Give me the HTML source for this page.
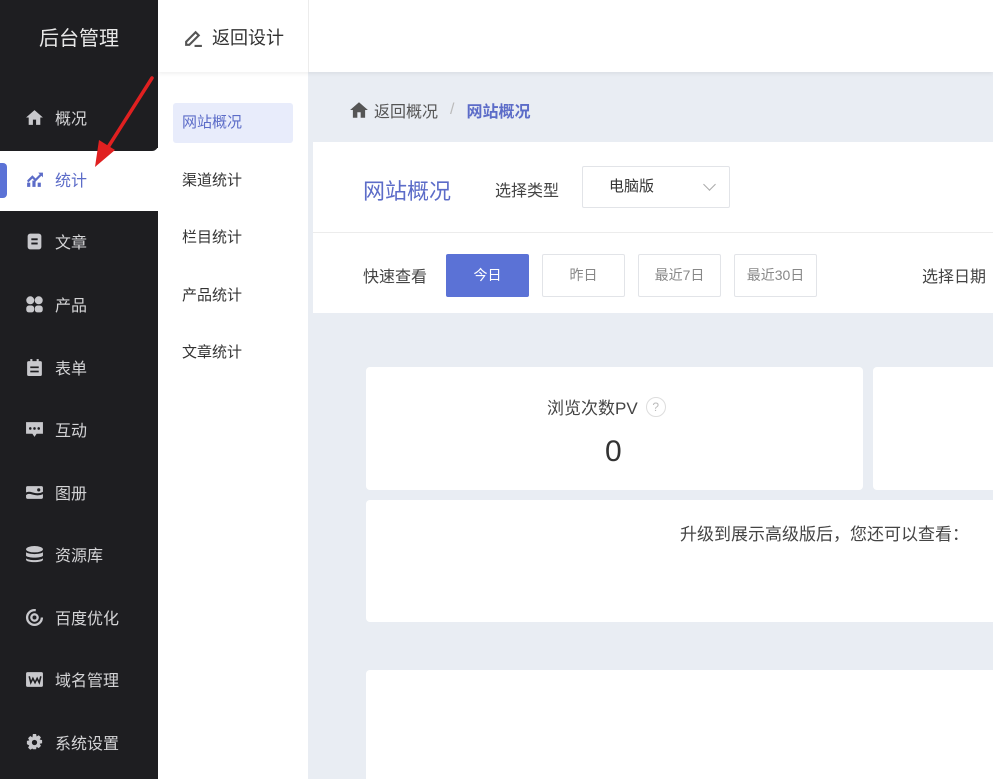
<!DOCTYPE html>
<html><head><meta charset="utf-8"><style>
*{margin:0;padding:0;box-sizing:border-box}
html,body{width:993px;height:779px;overflow:hidden}
body{background:#e9edf3;font-family:"Liberation Sans","Noto Sans CJK SC",sans-serif;position:relative}
.abs{position:absolute}
.side{left:0;top:0;width:158px;height:779px;background:#1e1e21}
.logo{left:0;top:22px;width:158px;text-align:center;color:#e8e8e8;font-size:20px}
.mi{left:0;width:158px;height:62px;color:#d4d4d6;font-size:16px;display:flex;align-items:center;padding-left:25px}
.mi svg{width:19px;height:19px;margin-right:11px;fill:#c8c8cc;flex-shrink:0}
.col2{left:158px;top:72px;width:150px;height:707px;background:#fff}
.sub{left:173px;width:120px;height:40px;line-height:40px;padding-left:9px;font-size:15px;color:#333}
.top{left:158px;top:0;width:835px;height:72px;background:#fff;box-shadow:0 2px 4px rgba(0,0,0,.06)}
.card{background:#fff;border-radius:4px}
.btn{top:254px;height:43px;border:1px solid #e2e4e8;background:#fff;border-radius:2px;font-size:14px;color:#888;text-align:center;line-height:41px}
</style></head><body>
<div class="abs side"></div>
<div class="abs logo">后台管理</div>
<div class="abs" style="left:0;top:148px;width:158px;height:63px;background:#fff"></div>
<div class="abs" style="left:0;top:143px;width:158px;height:8px;background:#1e1e21;border-radius:0 0 6px 0"></div>
<div class="abs" style="left:0;top:211px;width:158px;height:8px;background:#1e1e21;border-radius:0 6px 0 0"></div>
<div class="abs" style="left:0;top:163px;width:7px;height:35px;background:#5b72d6;border-radius:0 4px 4px 0"></div>

<div class="abs mi" style="top:86px"><svg viewBox="0 0 18 18"><path d="M9 2L1 9h2.5v7h4v-5h3v5h4V9H17z"/></svg>概况</div>
<div class="abs mi" style="top:148px;color:#5c6cc8"><svg viewBox="0 0 18 18" style="fill:#5c6cc8"><rect x="2" y="12" width="3" height="4"/><rect x="7" y="10" width="3" height="6"/><rect x="12" y="12" width="3" height="4"/><path d="M2 10l5-5 3 3 4-4-1.5-1.5H17v4.5L15.5 5.5 10 11 7 8 3 12z"/></svg>统计</div>
<div class="abs mi" style="top:210px"><svg viewBox="0 0 18 18"><rect x="2.5" y="1.5" width="13" height="15" rx="2.5"/><rect x="6" y="6" width="6" height="1.8" fill="#1e1e21"/><rect x="6" y="10" width="6" height="1.8" fill="#1e1e21"/></svg>文章</div>
<div class="abs mi" style="top:273px"><svg viewBox="0 0 18 18"><circle cx="5" cy="5" r="3.8"/><circle cx="13" cy="5" r="3.8"/><rect x="1.2" y="10" width="7.5" height="6.5" rx="2.5"/><rect x="9.3" y="10" width="7.5" height="6.5" rx="2.5"/></svg>产品</div>
<div class="abs mi" style="top:336px"><svg viewBox="0 0 18 18"><rect x="2" y="3" width="14" height="14" rx="1.5"/><rect x="5" y="1" width="2" height="4"/><rect x="11" y="1" width="2" height="4"/><rect x="5" y="8" width="8" height="1.6" fill="#1e1e21"/><rect x="5" y="12" width="8" height="1.6" fill="#1e1e21"/></svg>表单</div>
<div class="abs mi" style="top:398px"><svg viewBox="0 0 18 18"><path d="M1 2h16v11H11l-2 3-2-3H1z"/><circle cx="5" cy="8" r="1.2" fill="#1e1e21"/><circle cx="9" cy="8" r="1.2" fill="#1e1e21"/><circle cx="13" cy="8" r="1.2" fill="#1e1e21"/></svg>互动</div>
<div class="abs mi" style="top:461px"><svg viewBox="0 0 18 18"><rect x="1" y="3" width="16" height="12" rx="1.5"/><path d="M0 11c5-5 9 3 18-2" stroke="#1e1e21" stroke-width="2" fill="none"/><circle cx="13" cy="6.5" r="1.5" fill="#1e1e21"/></svg>图册</div>
<div class="abs mi" style="top:523px"><svg viewBox="0 0 18 18"><ellipse cx="9" cy="4" rx="8" ry="3"/><path d="M1 6.8c2 2.4 14 2.4 16 0v3.4c-2 2.4-14 2.4-16 0z"/><path d="M1 12.5c2 2.4 14 2.4 16 0v1.5c0 3-16 3-16 0z"/></svg>资源库</div>
<div class="abs mi" style="top:586px"><svg viewBox="0 0 18 18"><circle cx="9" cy="9" r="7" style="fill:none;stroke:#c8c8cc;stroke-width:2.2" stroke-dasharray="34 10"/><circle cx="9" cy="9" r="3" style="fill:none;stroke:#c8c8cc;stroke-width:2.2"/></svg>百度优化</div>
<div class="abs mi" style="top:648px"><svg viewBox="0 0 18 18"><rect x="1" y="2" width="16" height="14" rx="1.5"/><path d="M4 6l1.5 6 2-4 2 4 2-4 2 4L15 6" stroke="#1e1e21" stroke-width="1.5" fill="none"/></svg>域名管理</div>
<div class="abs mi" style="top:711px"><svg viewBox="0 0 18 18"><path d="M7.5 1h3l.5 2.3 2-1.2 2.1 2.1-1.2 2 2.3.5v3l-2.3.5 1.2 2-2.1 2.1-2-1.2-.5 2.3h-3L7 14.7l-2 1.2-2.1-2.1 1.2-2L1.8 10.5v-3L4.1 7 2.9 5l2.1-2.1 2 1.2z"/><circle cx="9" cy="9" r="2.5" fill="#1e1e21"/></svg>系统设置</div>

<div class="abs col2"></div>
<div class="abs top"></div>
<div class="abs" style="left:308px;top:0;width:1px;height:72px;background:#ececec"></div>
<div class="abs" style="left:183px;top:24px;font-size:18px;color:#333;display:flex;align-items:center"><svg width="21" height="21" viewBox="0 0 20 20" style="margin-right:8px"><path d="M3 14l9-9 3 3-9 9H3z M11 18h7" stroke="#555" stroke-width="2" fill="none"/></svg>返回设计</div>

<div class="abs sub" style="top:103px;background:#e8ecfb;color:#5c6cc8;border-radius:3px">网站概况</div>
<div class="abs sub" style="top:161px">渠道统计</div>
<div class="abs sub" style="top:218px">栏目统计</div>
<div class="abs sub" style="top:276px">产品统计</div>
<div class="abs sub" style="top:333px">文章统计</div>

<div class="abs" style="left:349px;top:98px;font-size:16px;color:#555;display:flex;align-items:center"><svg width="20" height="20" viewBox="0 0 18 18" style="margin-right:5px"><path d="M9 2L1 9h2.5v7h4v-5h3v5h4V9H17z" fill="#555"/></svg>返回概况<span style="color:#bbb;margin:0 12px">/</span><b style="color:#5c6cc8">网站概况</b></div>

<div class="abs" style="left:313px;top:142px;width:680px;height:171px;background:#fff"></div>
<div class="abs" style="left:313px;top:232px;width:680px;height:1px;background:#ececec"></div>
<div class="abs" style="left:363px;top:174px;font-size:22px;color:#5c6cc8">网站概况</div>
<div class="abs" style="left:495px;top:177px;font-size:16px;color:#444">选择类型</div>
<div class="abs" style="left:582px;top:166px;width:148px;height:42px;border:1px solid #e2e4e8;border-radius:2px;font-size:15px;color:#333;line-height:40px;padding-left:26px">电脑版<span style="position:absolute;left:122px;top:13px;width:9px;height:9px;border-right:1px solid #aaa;border-bottom:1px solid #aaa;transform:rotate(45deg)"></span></div>
<div class="abs" style="left:363px;top:263px;font-size:16px;color:#444">快速查看</div>
<div class="abs btn" style="left:446px;width:83px;background:#5b72d6;border-color:#5b72d6;color:#fff">今日</div>
<div class="abs btn" style="left:542px;width:83px">昨日</div>
<div class="abs btn" style="left:638px;width:83px">最近7日</div>
<div class="abs btn" style="left:734px;width:83px">最近30日</div>
<div class="abs" style="left:922px;top:263px;font-size:16px;color:#444;white-space:nowrap">选择日期</div>

<div class="abs card" style="left:366px;top:367px;width:497px;height:123px"></div>
<div class="abs card" style="left:873px;top:367px;width:130px;height:123px"></div>
<div class="abs" style="left:547px;top:394px;font-size:17px;color:#444;display:flex;align-items:center">浏览次数PV<span style="margin-left:8px;width:20px;height:20px;border:1px solid #ddd;border-radius:50%;font-size:12px;color:#bbb;text-align:center;line-height:18px">?</span></div>
<div class="abs" style="left:605px;top:435px;font-size:30px;color:#333">0</div>
<div class="abs card" style="left:366px;top:500px;width:640px;height:122px"></div>
<div class="abs" style="left:680px;top:520px;font-size:17px;color:#444;white-space:nowrap">升级到展示高级版后，您还可以查看：</div>
<div class="abs card" style="left:366px;top:670px;width:640px;height:109px;border-radius:4px 4px 0 0"></div>

<svg class="abs" style="left:85px;top:72px" width="75" height="100" viewBox="0 0 75 100"><path d="M67 6L20 80" stroke="#e02020" stroke-width="3.5" stroke-linecap="round"/><path d="M10 95L14 68L30 78z" fill="#e02020"/></svg>
</body></html>
